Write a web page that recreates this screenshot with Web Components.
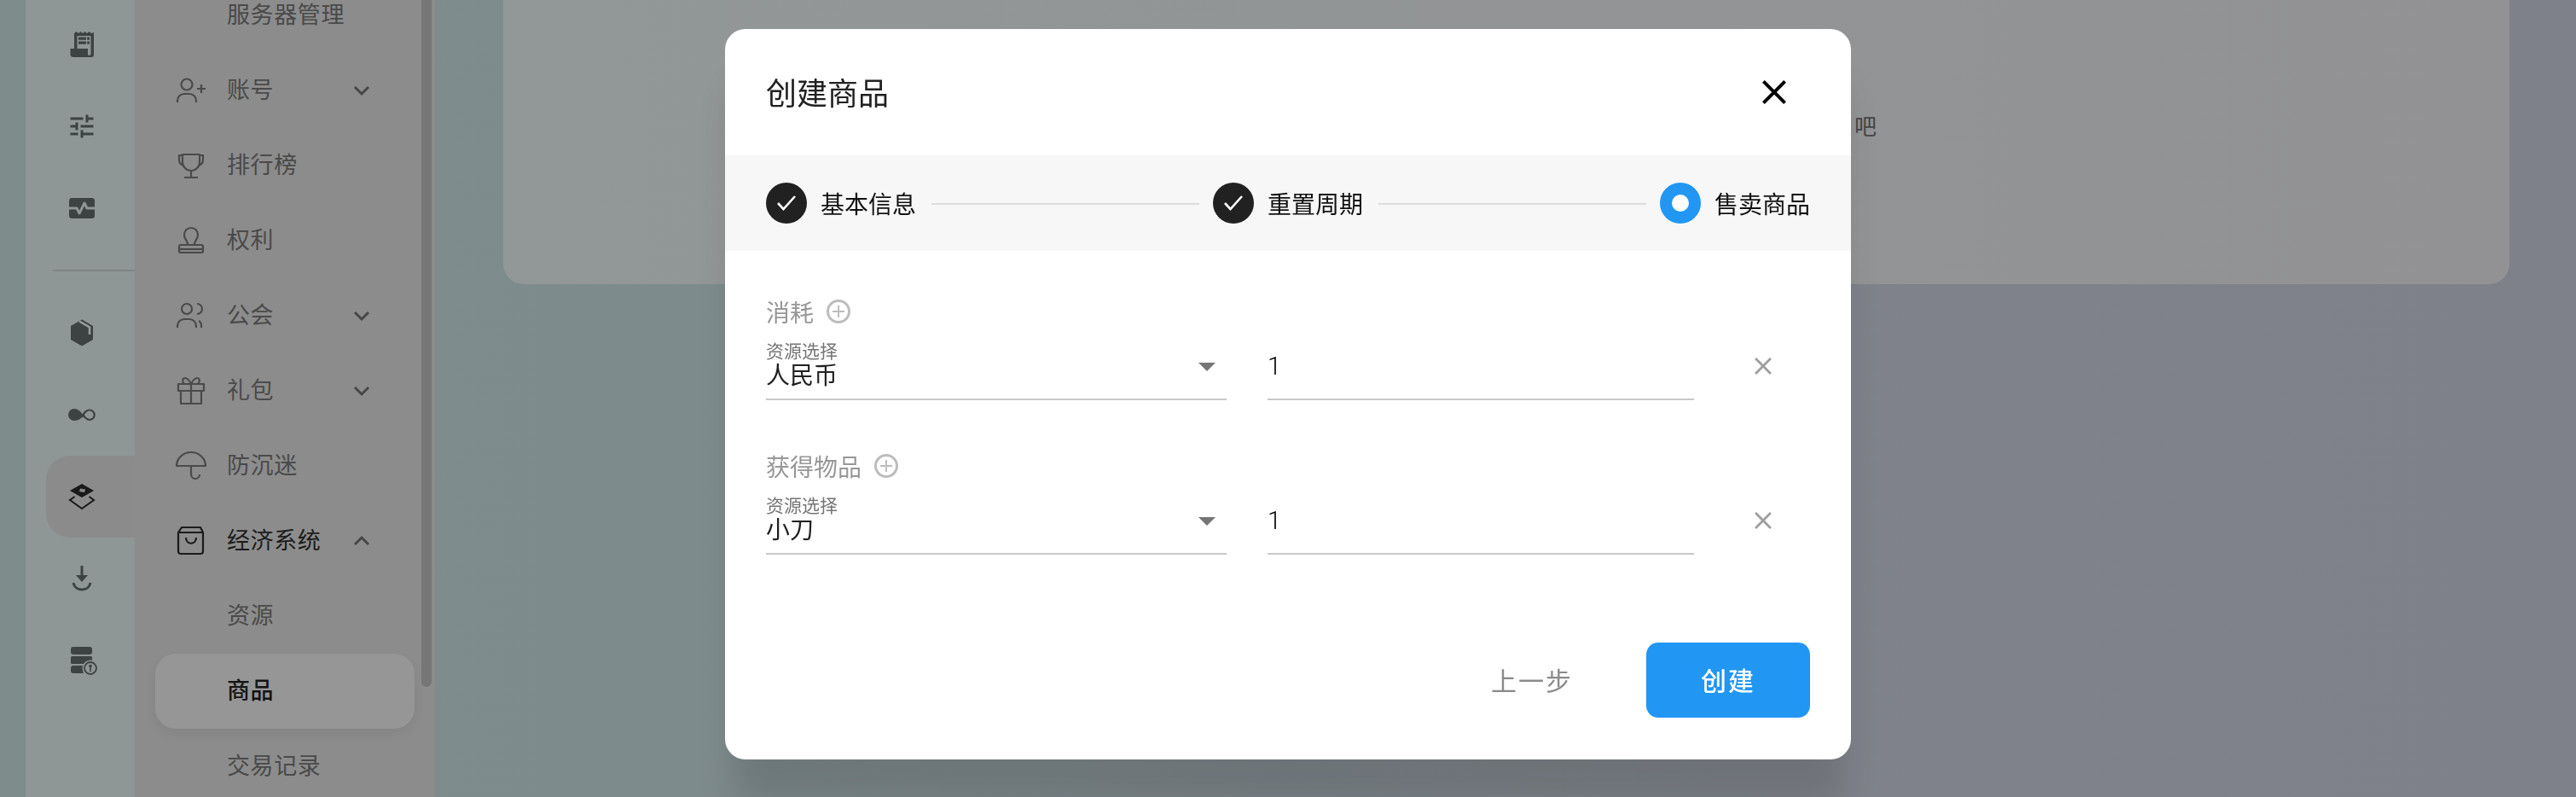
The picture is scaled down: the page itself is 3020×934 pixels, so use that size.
<!DOCTYPE html>
<html lang="zh-CN">
<head>
<meta charset="utf-8">
<title>创建商品</title>
<style>
html, body { margin: 0; height: 934px; overflow: hidden; }
body {
    font-family: Roboto, "Noto Sans CJK SC", sans-serif;
    font-size: 28px;
    background: linear-gradient(90deg, #7e8c8c 0%, #7e8b8c 28%, #7d858a 50%, #7f828a 75%, #7f818a 100%);
}
svg { display: block; }
</style>
</head>
<body>

<app-shell>
    <mini-rail slot="rail">
        <rail-item>
            <svg width="36" height="36" viewBox="0 0 36 36" fill="currentColor">
                <path fill-rule="evenodd" d="M9 5l2.500-2 2.500 2 2.500-2 2.500 2 2.500-2 2.500 2 2.500-2 2.500 2 3-1V30c0 2-1 3-3 3H8c-2 0-3.500-1-3.500-3v-7H9zM12.500 8v15H25v6c0 1 .7 2 1.700 2s1.800-1 1.800-2V8z"/>
                <path d="M14 9.500h9v3.200h-9zM24.200 9.500H27v3.200h-2.800zM14 14.500h9v3.200h-9zM24.200 14.500H27v3.200h-2.800z"/>
            </svg>
        </rail-item>
        <rail-item>
            <svg width="36" height="36" viewBox="0 0 24 24" fill="currentColor"><path d="M3 17v2h6v-2H3zM3 5v2h10V5H3zm10 16v-2h8v-2h-8v-2h-2v6h2zM7 9v2H3v2h4v2h2V9H7zm14 4v-2H11v2h10zm-6-4h2V7h4V5h-4V3h-2v6z"/></svg>
        </rail-item>
        <rail-item>
            <svg width="36" height="36" viewBox="0 0 24 24" fill="currentColor"><path d="M15.110 12.450 14 10.240l-3.110 6.210c-.16.34-.51.55-.89.55s-.73-.21-.89-.55L7.380 13H2v5c0 1.100.9 2 2 2h16c1.100 0 2-.9 2-2v-5h-6c-.38 0-.73-.21-.89-.55z"/><path d="M20 4H4c-1.100 0-2 .9-2 2v5h6c.38 0 .73.21.89.55L10 13.760l3.110-6.210c.34-.68 1.450-.68 1.790 0L16.620 11H22V6c0-1.100-.9-2-2-2z"/></svg>
        </rail-item>
        <rail-divider></rail-divider>
        <rail-item>
            <svg width="36" height="36" viewBox="0 0 36 36" fill="currentColor">
                <path d="M18 2.500L31 10v16l-13 7.500L5 26V10z"/>
                <path d="M15 4.500l12 7v8.500" fill="none" stroke="#9a9f9f" stroke-width="2.500"/>
            </svg>
        </rail-item>
        <rail-item>
            <svg width="36" height="36" viewBox="0 0 36 36">
                <path d="M9 11c5 0 8 4 11 8l-3 3c-2 2-5 3-8 3a7 7 0 0 1 0-14z" fill="currentColor"/>
                <path d="M18 21c2-4 4-8.500 9-8.500a5.700 5.700 0 0 1 0 11.400c-3 0-5-2-7-5" fill="none" stroke="currentColor" stroke-width="2.200"/>
            </svg>
        </rail-item>
        <rail-item active>
            <svg width="36" height="36" viewBox="0 0 36 36" style="color:#1a1a1a">
                <path d="M18 3l14 8-14 8-14-8z" fill="currentColor"/>
                <path d="M16 8.500l6 1-1 3.500-6-1z" fill="#8b8b8b"/>
                <path d="M9.500 18L4 22l14 10 14-10-5.500-4" fill="none" stroke="currentColor" stroke-width="2"/>
            </svg>
        </rail-item>
        <rail-item>
            <svg width="36" height="36" viewBox="0 0 36 36" fill="none" stroke="currentColor">
                <path d="M18 3v14" stroke-width="3"/>
                <path d="M11 14h14l-7 8z" fill="currentColor" stroke="none"/>
                <path d="M8 23c1 5 5 8 10 8s9-3 10-8" stroke-width="3"/>
            </svg>
        </rail-item>
        <rail-item>
            <svg width="36" height="36" viewBox="0 0 36 36" fill="currentColor">
                <rect x="5" y="2" width="25" height="9" rx="3"/>
                <rect x="5" y="13" width="25" height="9" rx="1.500"/>
                <rect x="5" y="24" width="16" height="9" rx="3"/>
                <circle cx="28" cy="27" r="9.500" fill="#909696"/>
                <circle cx="28" cy="27" r="7" fill="none" stroke="currentColor" stroke-width="1.800"/>
                <circle cx="28" cy="24.500" r="1.800"/>
                <path d="M27.200 25h1.600v6h-1.600z"/>
            </svg>
        </rail-item>
    </mini-rail>

    <nav-sidebar slot="side">
        <nav-item label="服务器管理"></nav-item>
        <nav-item label="账号" chevron="down">
            <svg slot="icon" width="40" height="40" viewBox="0 0 40 40"><circle cx="15" cy="13" r="6.500"/><path d="M4 34v-2a8 8 0 0 1 8-8h6a8 8 0 0 1 8 8v2M27 18h10M32 13v10"/></svg>
        </nav-item>
        <nav-item label="排行榜">
            <svg slot="icon" width="40" height="40" viewBox="0 0 40 40"><path d="M10 7h20v9a10 10 0 0 1-20 0zM10 8H6v5c0 3 2 6 5 7M30 8h4v5c0 3-2 6-5 7M20 26v8M12 34h16"/></svg>
        </nav-item>
        <nav-item label="权利">
            <svg slot="icon" width="40" height="40" viewBox="0 0 40 40"><path d="M16 24c0-4-4-5-4-11a8 8 0 0 1 16 0c0 6-4 7-4 11"/><rect x="6" y="25" width="28" height="9" rx="2"/><path d="M6 30h28"/></svg>
        </nav-item>
        <nav-item label="公会" chevron="down">
            <svg slot="icon" width="40" height="40" viewBox="0 0 40 40"><circle cx="15" cy="12" r="6"/><path d="M4 34v-2a8 8 0 0 1 8-8h6a8 8 0 0 1 8 8v2M27 6a6 6 0 0 1 0 12M32 34v-2c0-3-1-5-3-6"/></svg>
        </nav-item>
        <nav-item label="礼包" chevron="down">
            <svg slot="icon" width="40" height="40" viewBox="0 0 40 40"><rect x="5" y="12" width="30" height="8"/><path d="M8 20v15h24V20M20 12v23M20 12c-2-4-4-7-7-7-3 0-4 4-1 7M20 12c2-4 4-7 7-7 3 0 4 4 1 7"/></svg>
        </nav-item>
        <nav-item label="防沉迷">
            <svg slot="icon" width="40" height="40" viewBox="0 0 40 40"><path d="M3 20a17 16 0 0 1 34 0zM20 20v10a5 5 0 0 0 10 0"/></svg>
        </nav-item>
        <nav-item label="经济系统" chevron="up" current>
            <svg slot="icon" width="40" height="40" viewBox="0 0 40 40"><path d="M9 4h22l3 6v22a3 3 0 0 1-3 3H8a3 3 0 0 1-3-3V10zM5 10h29M14 16c0 9 12 9 12 0"/></svg>
        </nav-item>
        <nav-item label="资源"></nav-item>
        <nav-item label="商品" active></nav-item>
        <nav-item label="交易记录"></nav-item>
    </nav-sidebar>

    <content-card slot="main">吧</content-card>
</app-shell>

<create-dialog heading="创建商品">
    <step-bar slot="steps">
        <step-item label="基本信息" state="done"></step-item>
        <step-item label="重置周期" state="done"></step-item>
        <step-item label="售卖商品" state="active"></step-item>
    </step-bar>
    <resource-section heading="消耗" value="人民币"></resource-section>
    <resource-section heading="获得物品" value="小刀"></resource-section>
    <span slot="back">上一步</span>
    <span slot="confirm">创建</span>
</create-dialog>

<script>
class AppShell extends HTMLElement {
    constructor() {
        super();
        this.attachShadow({mode: 'open'});
        this.shadowRoot.innerHTML = `
<style>
:host { display: grid; grid-template-columns: 128px 352px 1fr; height: 934px; padding-left: 30px; box-sizing: border-box; overflow: hidden; }
</style>
<slot name="rail"></slot>
<slot name="side"></slot>
<slot name="main"></slot>`;
    }
}

class MiniRail extends HTMLElement {
    constructor() {
        super();
        this.attachShadow({mode: 'open'});
        this.shadowRoot.innerHTML = `
<style>
:host { display: flex; flex-direction: column; padding: 4px 0 0 24px; background: #8f9696; color: #3d4242; }
</style>
<slot></slot>`;
    }
}

class RailItem extends HTMLElement {
    constructor() {
        super();
        this.attachShadow({mode: 'open'});
        this.shadowRoot.innerHTML = `
<style>
:host { display: flex; height: 96px; flex: none; align-items: center; padding-left: 24px; }
:host([active]) { background: #8b8b8b; border-radius: 28px 0 0 28px; }
</style>
<slot></slot>`;
    }
}

class RailDivider extends HTMLElement {
    constructor() {
        super();
        this.attachShadow({mode: 'open'});
        this.shadowRoot.innerHTML = `
<style>
:host { display: block; height: 2px; margin: 24px 0 24px 8px; flex: none; background: #808484; }
</style>`;
    }
}

class NavSidebar extends HTMLElement {
    constructor() {
        super();
        this.attachShadow({mode: 'open'});
        this.shadowRoot.innerHTML = `
<style>
:host { display: block; position: relative; background: #8c8c8c; overflow: hidden; }
.list { display: flex; flex-direction: column; margin-top: -26px; padding: 0 24px; }
.thumb { position: absolute; left: 336px; top: -10px; width: 12px; height: 815px; border-radius: 6px; background: #767676; }
</style>
<div class="list"><slot></slot></div>
<div class="thumb"></div>`;
    }
}

class NavItem extends HTMLElement {
    constructor() {
        super();
        this.attachShadow({mode: 'open'});
        const chevron = this.getAttribute('chevron');
        let arrow = '';
        if (chevron) {
            const d = chevron === 'up' ? 'M2 11l8-8 8 8' : 'M2 3l8 8 8-8';
            arrow = `<svg class="chevron" width="20" height="14" viewBox="0 0 20 14"><path d="${d}"/></svg>`;
        }
        this.shadowRoot.innerHTML = `
<style>
:host { display: flex; align-items: center; height: 88px; width: 304px; box-sizing: border-box; padding-left: 22px; border-radius: 24px; color: #4a4a4a; flex: none; }
:host([current]) { color: #1c1c1c; }
:host([active]) { color: #141414; background: #969696; box-shadow: 0 6px 14px rgba(0,0,0,.06); font-weight: 500; }
.icon { width: 40px; height: 40px; margin-right: 22px; flex: none; }
::slotted(svg) { display: block; fill: none; stroke: currentColor; stroke-width: 2.200; stroke-linejoin: round; }
.label { font-size: 27px; letter-spacing: .6px; line-height: 40px; flex: 1; }
.chevron { fill: none; stroke: #474747; stroke-width: 3; margin-right: 52px; }
</style>
<div class="icon"><slot name="icon"></slot></div>
<span class="label">${this.getAttribute('label')}</span>
${arrow}`;
    }
}

class ContentCard extends HTMLElement {
    constructor() {
        super();
        this.attachShadow({mode: 'open'});
        this.shadowRoot.innerHTML = `
<style>
:host { display: block; height: 333px; margin: 0 78px 0 80px; padding: 128px 0 0 1584px; box-sizing: border-box; border-radius: 0 0 24px 24px; background: linear-gradient(90deg, #929797, #929596 40%, #929294); color: #454545; font-size: 26px; line-height: 42px; }
</style>
<slot></slot>`;
    }
}

class CreateDialog extends HTMLElement {
    constructor() {
        super();
        this.attachShadow({mode: 'open'});
        this.shadowRoot.innerHTML = `
<style>
:host { position: fixed; inset: 0; display: flex; justify-content: center; align-items: flex-start; padding-top: 34px; box-sizing: border-box; }
.paper { width: 1320px; height: 856px; display: flex; flex-direction: column; background: #fff; border-radius: 24px; overflow: hidden; }
.shadow { border-radius: 24px; box-shadow: 0 60px 40px -8px rgba(0,0,0,.13); }
header { height: 148px; flex: none; display: flex; align-items: center; justify-content: space-between; padding: 0 66px 0 48px; box-sizing: border-box; }
h2 { margin: -3px 0 0; font-size: 36px; font-weight: 400; color: #212121; }
.close { width: 48px; height: 48px; fill: #000; }
.body { flex: 1; padding: 51px 48px 0; display: flex; flex-direction: column; gap: 57px; }
footer { height: 137px; flex: none; display: flex; justify-content: flex-end; padding-right: 48px; box-sizing: border-box; }
.back, .confirm { width: 192px; height: 88px; box-sizing: border-box; padding-bottom: 3px; display: flex; align-items: center; justify-content: center; font-size: 30px; letter-spacing: 2px; border-radius: 14px; }
.back { color: #8a8a8a; margin-right: 38px; }
.confirm { background: #2196f3; color: #fff; font-weight: 500; }
</style>
<div class="shadow">
<div class="paper">
    <header>
        <h2>${this.getAttribute('heading')}</h2>
        <svg class="close" viewBox="0 0 24 24"><path d="M19 6.410 17.590 5 12 10.590 6.410 5 5 6.410 10.590 12 5 17.590 6.410 19 12 13.410 17.590 19 19 17.590 13.410 12z"/></svg>
    </header>
    <slot name="steps"></slot>
    <div class="body"><slot></slot></div>
    <footer>
        <div class="back"><slot name="back"></slot></div>
        <div class="confirm"><slot name="confirm"></slot></div>
    </footer>
</div>
</div>`;
    }
}

class StepBar extends HTMLElement {
    constructor() {
        super();
        this.attachShadow({mode: 'open'});
        this.shadowRoot.innerHTML = `
<style>
:host { display: flex; align-items: center; height: 112px; flex: none; padding: 0 48px; background: #f7f7f7; }
</style>
<slot></slot>`;
    }
}

class StepItem extends HTMLElement {
    constructor() {
        super();
        this.attachShadow({mode: 'open'});
        const mark = this.getAttribute('state') === 'active'
            ? '<span class="dot"></span>'
            : '<svg width="24" height="24" viewBox="0 0 24 24"><path d="M2 12l6.500 7L22 4" fill="none" stroke="#fff" stroke-width="2.600"/></svg>';
        this.shadowRoot.innerHTML = `
<style>
:host { display: flex; align-items: center; flex: 1; color: #111; }
:host(:last-child) { flex: none; }
.circle { width: 48px; height: 48px; flex: none; border-radius: 50%; background: #212121; display: flex; align-items: center; justify-content: center; }
:host([state="active"]) .circle { background: #2196f3; }
.dot { width: 20px; height: 20px; border-radius: 50%; background: #fff; }
.label { margin-left: 16px; white-space: nowrap; }
.line { flex: 1; height: 2px; margin: 2px 16px 0 18px; background: #dcdcdc; }
:host(:last-child) .line { display: none; }
</style>
<div class="circle">${mark}</div>
<span class="label">${this.getAttribute('label')}</span>
<div class="line"></div>`;
    }
}

class ResourceSection extends HTMLElement {
    constructor() {
        super();
        this.attachShadow({mode: 'open'});
        this.shadowRoot.innerHTML = `
<style>
:host { display: block; }
.head { height: 40px; display: flex; align-items: center; gap: 15px; color: #979797; }
.row { display: flex; height: 84px; align-items: flex-start; }
.select { width: 540px; height: 84px; box-sizing: border-box; border-bottom: 2px solid #c8c8c8; padding-top: 15px; position: relative; }
.small { display: block; font-size: 21px; line-height: 24px; color: #757575; }
.value { display: block; line-height: 34px; color: #212121; }
.arrow { position: absolute; left: 507px; top: 40px; }
.number { width: 500px; height: 84px; box-sizing: border-box; margin-left: 48px; border-bottom: 2px solid #c8c8c8; padding-top: 26px; line-height: 36px; font-size: 29px; font-weight: 300; color: #000; }
.remove { width: 34px; height: 34px; margin: 27px 0 0 64px; fill: #9e9e9e; }
</style>
<div class="head">
    <span>${this.getAttribute('heading')}</span>
    <svg width="28" height="28" viewBox="0 0 28 28" fill="none" stroke="#bdbdbd"><circle cx="14" cy="14" r="12.500" stroke-width="3"/><path d="M14 7v14M7 14h14" stroke-width="2"/></svg>
</div>
<div class="row">
    <div class="select">
        <span class="small">资源选择</span>
        <span class="value">${this.getAttribute('value')}</span>
        <svg class="arrow" width="20" height="10" viewBox="0 0 20 10"><path d="M0 0h20L10 10z" fill="#757575"/></svg>
    </div>
    <div class="number">1</div>
    <svg class="remove" viewBox="0 0 24 24"><path d="M19 6.410 17.590 5 12 10.590 6.410 5 5 6.410 10.590 12 5 17.590 6.410 19 12 13.410 17.590 19 19 17.590 13.410 12z"/></svg>
</div>`;
    }
}

window.customElements.define('app-shell', AppShell);
window.customElements.define('mini-rail', MiniRail);
window.customElements.define('rail-item', RailItem);
window.customElements.define('rail-divider', RailDivider);
window.customElements.define('nav-sidebar', NavSidebar);
window.customElements.define('nav-item', NavItem);
window.customElements.define('content-card', ContentCard);
window.customElements.define('create-dialog', CreateDialog);
window.customElements.define('step-bar', StepBar);
window.customElements.define('step-item', StepItem);
window.customElements.define('resource-section', ResourceSection);
</script>
</body>
</html>
